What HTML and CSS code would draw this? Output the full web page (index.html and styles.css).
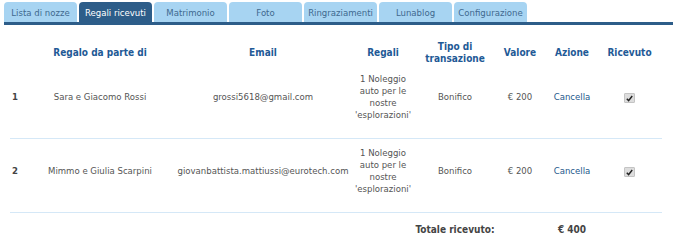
FILE: index.html
```html
<!DOCTYPE html>
<html lang="it">
<head>
    <meta charset="UTF-8">
    <title>Regali ricevuti</title>
    <link rel="stylesheet" href="styles.css">
</head>
<body>
    <ul class="tabs">
        <li class="tab">Lista di nozze</li>
        <li class="tab active">Regali ricevuti</li>
        <li class="tab">Matrimonio</li>
        <li class="tab">Foto</li>
        <li class="tab">Ringraziamenti</li>
        <li class="tab">Lunablog</li>
        <li class="tab">Configurazione</li>
    </ul>

    <table class="gifts">
        <colgroup>
            <col class="c-num">
            <col class="c-name">
            <col class="c-email">
            <col class="c-gift">
            <col class="c-type">
            <col class="c-value">
            <col class="c-action">
            <col class="c-check">
        </colgroup>
        <thead>
            <tr>
                <th></th>
                <th class="name">Regalo da parte di</th>
                <th class="email">Email</th>
                <th>Regali</th>
                <th>Tipo di transazione</th>
                <th>Valore</th>
                <th>Azione</th>
                <th class="recv">Ricevuto</th>
            </tr>
        </thead>
        <tbody>
            <tr>
                <td class="num">1</td>
                <td class="name">Sara e Giacomo Rossi</td>
                <td class="email">grossi5618@gmail.com</td>
                <td>1 Noleggio auto per le nostre 'esplorazioni'</td>
                <td>Bonifico</td>
                <td>€ 200</td>
                <td><a class="link" href="#">Cancella</a></td>
                <td class="recv"><span class="check"><svg width="7" height="7" viewBox="0 0 7 7"><path d="M0.8 3.8 L2.6 5.6 L6.2 1" fill="none" stroke="#222" stroke-width="1.5"/></svg></span></td>
            </tr>
            <tr>
                <td class="num">2</td>
                <td class="name">Mimmo e Giulia Scarpini</td>
                <td class="email">giovanbattista.mattiussi@eurotech.com</td>
                <td>1 Noleggio auto per le nostre 'esplorazioni'</td>
                <td>Bonifico</td>
                <td>€ 200</td>
                <td><a class="link" href="#">Cancella</a></td>
                <td class="recv"><span class="check"><svg width="7" height="7" viewBox="0 0 7 7"><path d="M0.8 3.8 L2.6 5.6 L6.2 1" fill="none" stroke="#222" stroke-width="1.5"/></svg></span></td>
            </tr>
        </tbody>
        <tfoot>
            <tr>
                <td></td>
                <td></td>
                <td></td>
                <td></td>
                <td class="total">Totale ricevuto:</td>
                <td></td>
                <td class="total">€ 400</td>
                <td></td>
            </tr>
        </tfoot>
    </table>
</body>
</html>
```

FILE: styles.css
```css
body {
    font-family: "DejaVu Sans Condensed", "Liberation Sans", sans-serif;
    font-stretch: condensed;
    font-size: 9.5px;
    color: #555;
    background-color: #fff;
    margin: 0;
    padding: 2px 7px 0 4px;
}
.tabs {
    display: flex;
    gap: 2px;
    list-style: none;
    margin: 0;
    padding: 0;
    border-bottom: 3px solid #2d5d89;
}
.tab {
    width: 73px;
    height: 20px;
    line-height: 21px;
    text-align: center;
    background-color: #a7d4f2;
    color: #40698f;
    border-radius: 4px 4px 0 0;
}
.tab.active {
    background-color: #2d5d89;
    color: #fff;
}
.gifts {
    width: 652px;
    margin: 15px 0 0 6px;
    border-collapse: collapse;
    table-layout: fixed;
}
.c-num { width: 28px; }
.c-name { width: 132px; }
.c-email { width: 182px; }
.c-gift { width: 62px; }
.c-type { width: 82px; }
.c-value { width: 48px; }
.c-action { width: 56px; }
.c-check { width: 62px; }
th {
    font-size: 10px;
    font-weight: bold;
    color: #1f5a96;
    line-height: 12px;
    padding: 1px 0 0;
    text-align: center;
    vertical-align: middle;
}
td {
    line-height: 12px;
    padding: 8px 0 17px;
    text-align: center;
    vertical-align: middle;
}
tbody tr {
    border-bottom: 1px solid #d5e8f7;
}
.name {
    padding-right: 8px;
}
.email {
    padding-left: 4px;
}
.recv {
    padding-right: 3px;
}
td.num {
    text-align: left;
    padding-left: 2px;
    font-weight: bold;
    color: #444;
}
.link {
    color: #25588c;
    text-decoration: none;
}
.check {
    display: inline-block;
    width: 9px;
    height: 8px;
    background-color: #ddd;
    border: 1px solid #c4c4c4;
    border-radius: 1px;
    vertical-align: middle;
    line-height: 0;
}
.check svg {
    margin-top: 1px;
}
tfoot td {
    padding: 11px 0;
}
.total {
    font-size: 10px;
    font-weight: bold;
    color: #444;
}
```
